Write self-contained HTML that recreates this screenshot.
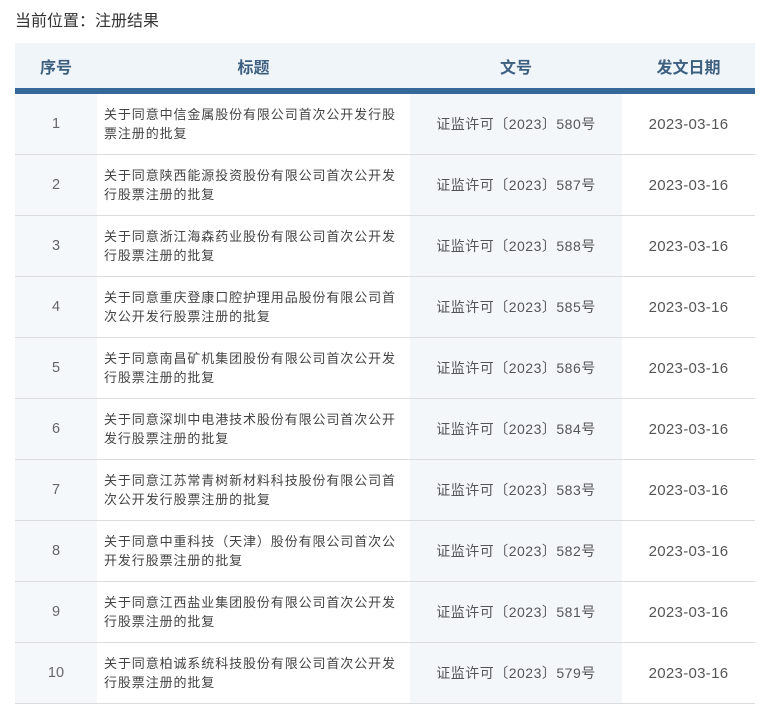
<!DOCTYPE html>
<html><head><meta charset="utf-8"><style>
body{margin:0;background:#fff;width:772px;height:705px;overflow:hidden;font-family:"Liberation Sans","Noto Sans CJK SC",sans-serif;color:#444}
.crumb{position:absolute;left:15px;top:11px;font-size:16px;color:#333;line-height:22px}
table{position:absolute;left:15px;top:43px;border-collapse:collapse;table-layout:fixed;width:740px}
th{height:45px;background:#f0f5fa;color:#3d5f80;font-size:16px;font-weight:bold;border-bottom:6px solid #36699a;padding:0}
td{height:60px;border-bottom:1px solid #dcdcdc;font-size:14px;padding:0;text-align:center;color:#555}
td.s{background:#f5f8fb;color:#666;font-size:14.5px}
td.t{text-align:left;padding-left:7px;line-height:19px;color:#444;font-size:13px;letter-spacing:0.9px;white-space:nowrap}
td.n{background:#f4f7fa;font-size:14px;letter-spacing:0.5px}
td.d{font-size:15px;letter-spacing:0.3px}
</style></head><body>
<div class="crumb">当前位置：注册结果</div>
<table>
<colgroup><col style="width:82px"><col style="width:313px"><col style="width:212px"><col style="width:133px"></colgroup>
<tr><th>序号</th><th>标题</th><th>文号</th><th>发文日期</th></tr>
<tr><td class="s">1</td><td class="t">关于同意中信金属股份有限公司首次公开发行股<br>票注册的批复</td><td class="n">证监许可〔2023〕580号</td><td class="d">2023-03-16</td></tr>
<tr><td class="s">2</td><td class="t">关于同意陕西能源投资股份有限公司首次公开发<br>行股票注册的批复</td><td class="n">证监许可〔2023〕587号</td><td class="d">2023-03-16</td></tr>
<tr><td class="s">3</td><td class="t">关于同意浙江海森药业股份有限公司首次公开发<br>行股票注册的批复</td><td class="n">证监许可〔2023〕588号</td><td class="d">2023-03-16</td></tr>
<tr><td class="s">4</td><td class="t">关于同意重庆登康口腔护理用品股份有限公司首<br>次公开发行股票注册的批复</td><td class="n">证监许可〔2023〕585号</td><td class="d">2023-03-16</td></tr>
<tr><td class="s">5</td><td class="t">关于同意南昌矿机集团股份有限公司首次公开发<br>行股票注册的批复</td><td class="n">证监许可〔2023〕586号</td><td class="d">2023-03-16</td></tr>
<tr><td class="s">6</td><td class="t">关于同意深圳中电港技术股份有限公司首次公开<br>发行股票注册的批复</td><td class="n">证监许可〔2023〕584号</td><td class="d">2023-03-16</td></tr>
<tr><td class="s">7</td><td class="t">关于同意江苏常青树新材料科技股份有限公司首<br>次公开发行股票注册的批复</td><td class="n">证监许可〔2023〕583号</td><td class="d">2023-03-16</td></tr>
<tr><td class="s">8</td><td class="t">关于同意中重科技（天津）股份有限公司首次公<br>开发行股票注册的批复</td><td class="n">证监许可〔2023〕582号</td><td class="d">2023-03-16</td></tr>
<tr><td class="s">9</td><td class="t">关于同意江西盐业集团股份有限公司首次公开发<br>行股票注册的批复</td><td class="n">证监许可〔2023〕581号</td><td class="d">2023-03-16</td></tr>
<tr><td class="s">10</td><td class="t">关于同意柏诚系统科技股份有限公司首次公开发<br>行股票注册的批复</td><td class="n">证监许可〔2023〕579号</td><td class="d">2023-03-16</td></tr>
</table>
</body></html>
